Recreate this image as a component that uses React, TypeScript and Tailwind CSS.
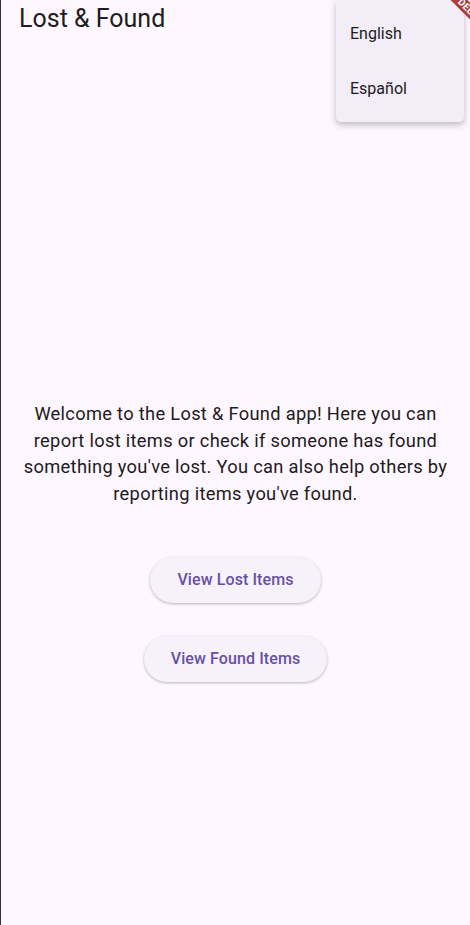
import React from "react";

const font = { fontFamily: "Roboto, 'Noto Sans', sans-serif" };

const LanguageMenu = () => (
  <div className="absolute right-[6px] top-0 z-10 w-[128px] rounded-b-[5px] bg-[#f3edf7] py-[6px] shadow-[0_3px_6px_rgba(0,0,0,0.25)]">
    {["English", "Español"].map((lang) => (
      <div
        key={lang}
        className="flex h-[55px] items-center px-[14px] text-[16px] text-[#1d1b20]"
      >
        {lang}
      </div>
    ))}
  </div>
);

const DebugBanner = () => (
  <div className="pointer-events-none absolute left-[430px] top-[5.5px] z-20 flex h-[12px] w-[80px] rotate-45 items-center justify-center bg-[#b13b3b]">
    <span className="text-[10px] font-bold leading-none tracking-wide text-white">DEBUG</span>
  </div>
);

const PillButton = ({ label }: { label: string }) => (
  <button className="h-[46px] rounded-full bg-[#f7f2fa] px-[27px] text-[16px] font-medium tracking-[0.1px] text-[#6750a4] shadow-[0_1px_3px_rgba(0,0,0,0.28)]">
    {label}
  </button>
);

export default function App() {
  return (
    <div
      className="relative h-[925px] w-full overflow-hidden border-l border-[#333333] bg-[#fef7ff]"
      style={font}
    >
      <header className="h-[40px] pl-[18px] pt-[4px]">
        <h1 className="text-[25px] leading-[30px] text-[#1d1b20]">Lost &amp; Found</h1>
      </header>

      <LanguageMenu />
      <DebugBanner />

      <main className="flex flex-col items-center pt-[361px]">
        <p className="px-[18px] text-center text-[18.3px] leading-[26.7px] tracking-[0.3px] text-[#1d1b20]">
          Welcome to the Lost &amp; Found app! Here you can report lost items or check if
          someone has found something you've lost. You can also help others by reporting
          items you've found.
        </p>
        <div className="mt-[49px] flex flex-col items-center gap-[33px]">
          <PillButton label="View Lost Items" />
          <PillButton label="View Found Items" />
        </div>
      </main>
    </div>
  );
}
